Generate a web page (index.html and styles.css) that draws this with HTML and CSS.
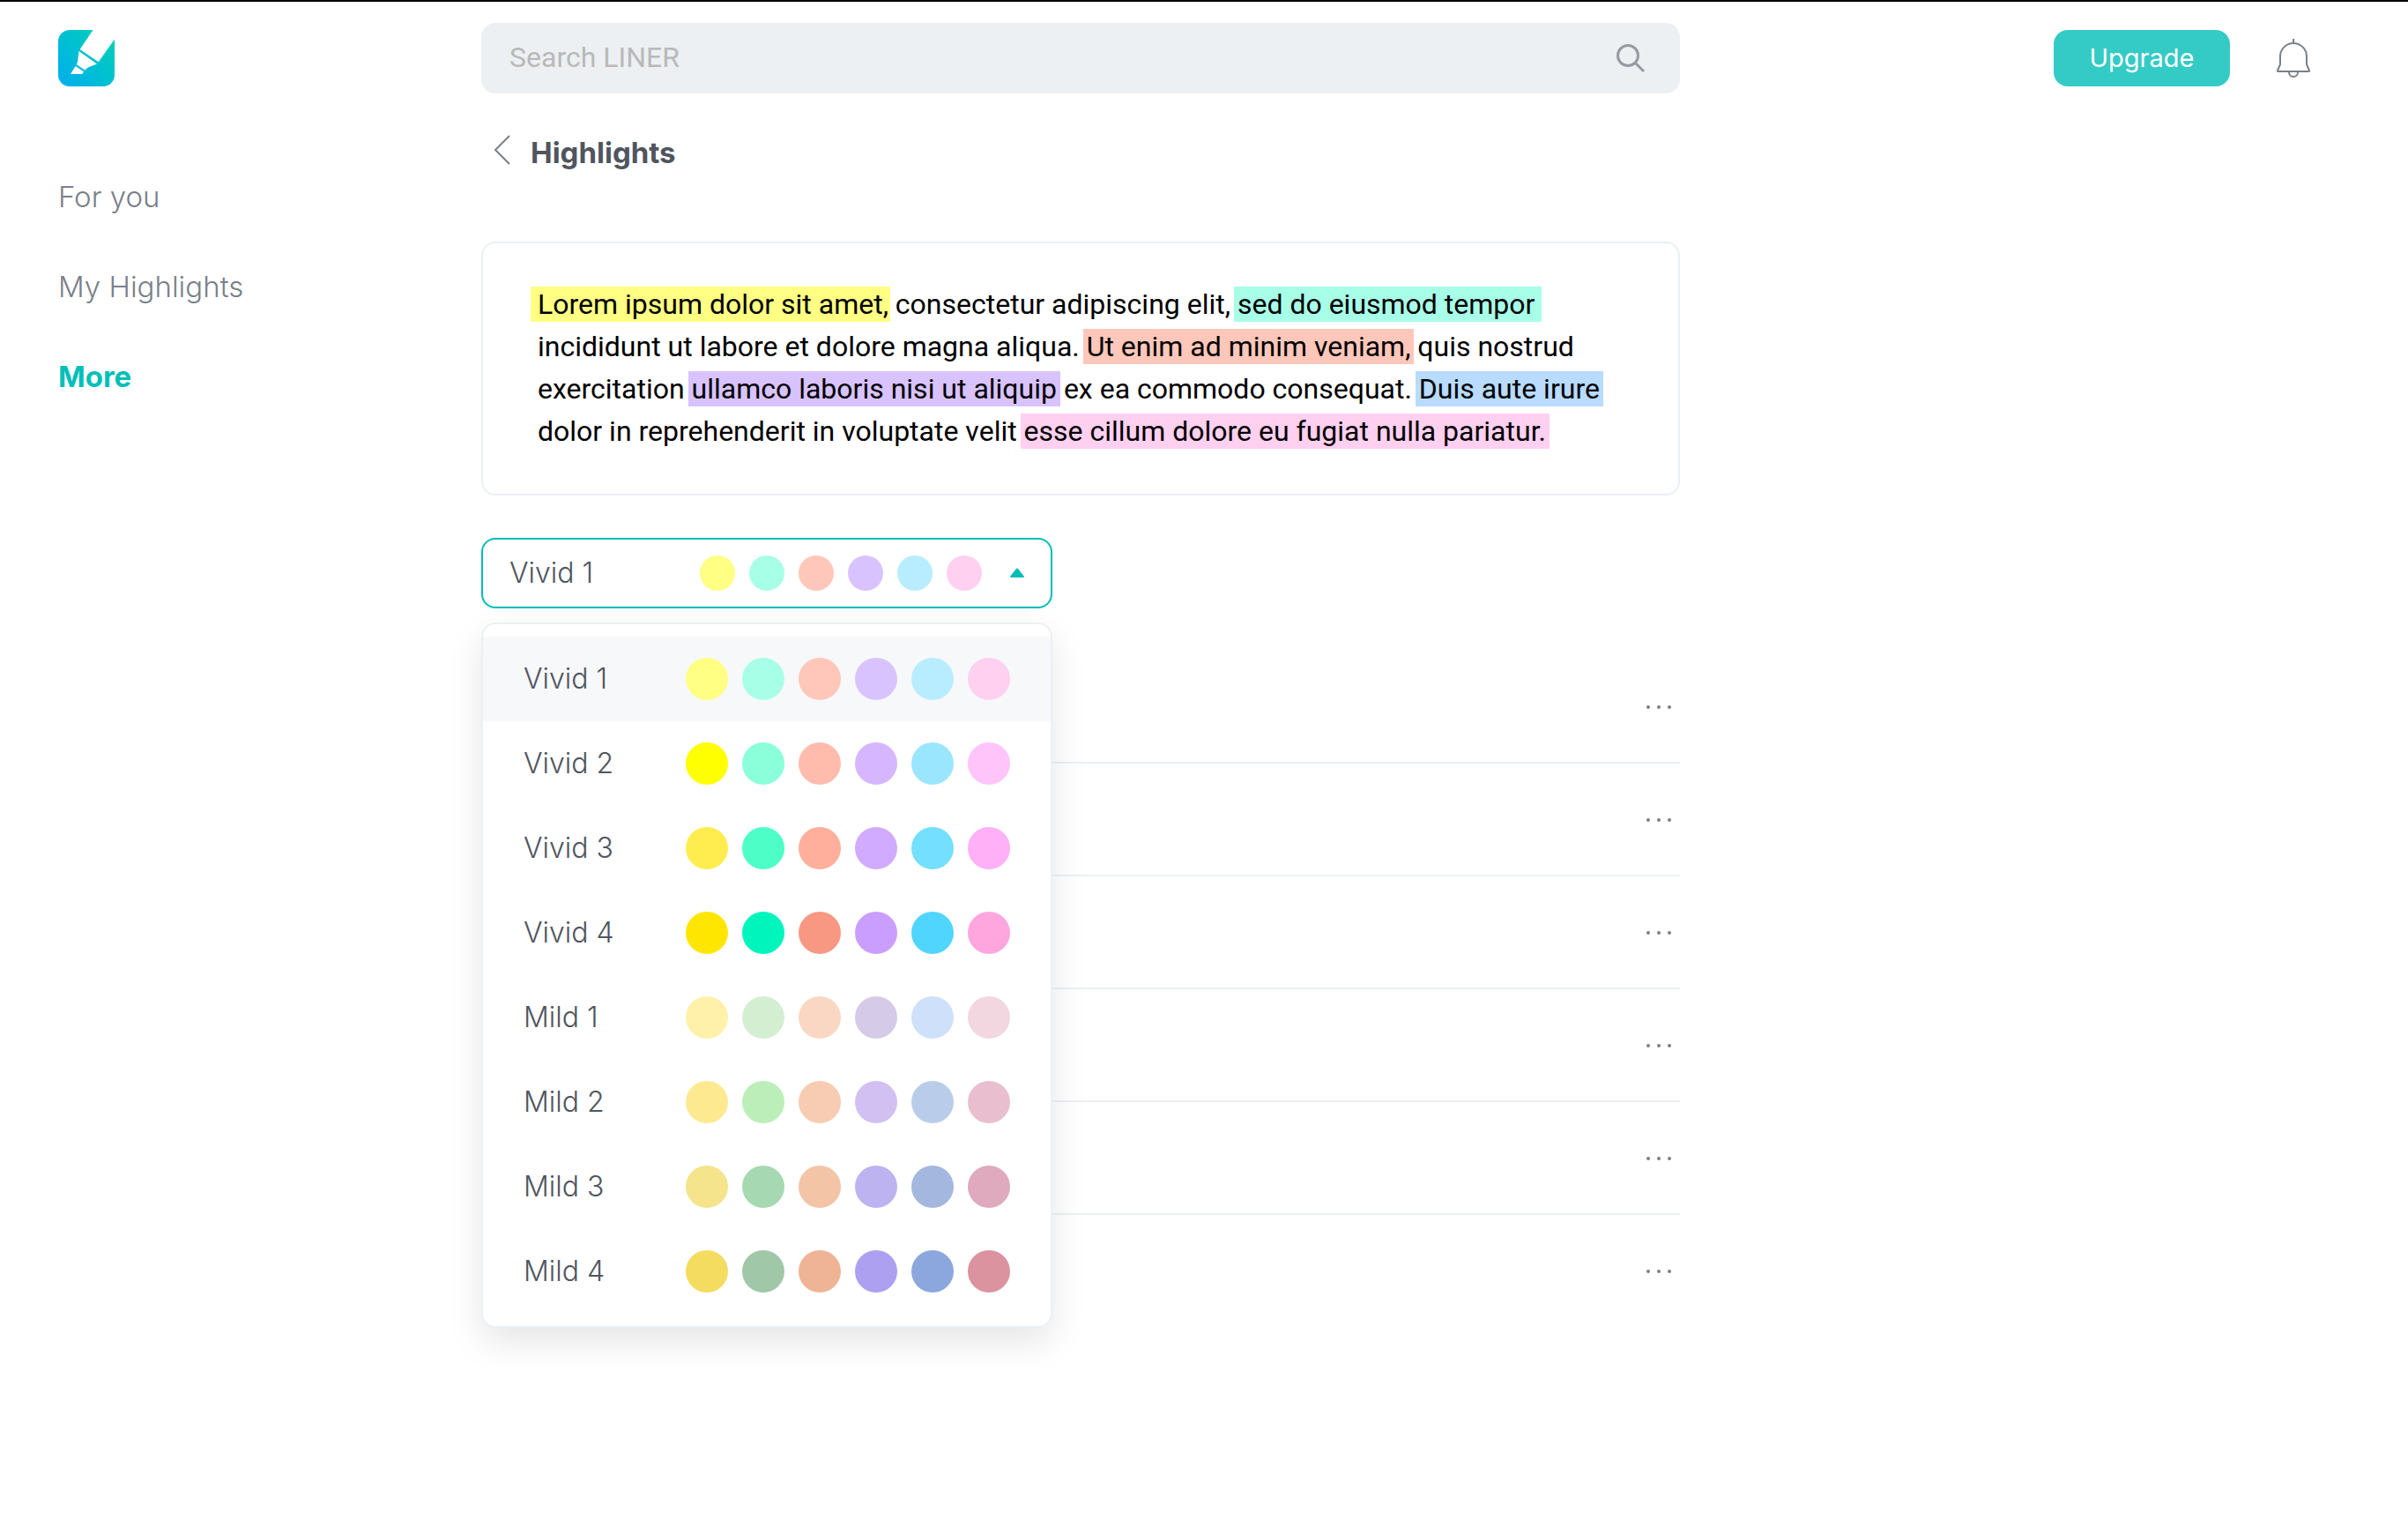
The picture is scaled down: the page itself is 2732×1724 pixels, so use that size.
FILE: index.html
```html
<!DOCTYPE html>
<html lang="en">
<head>
<meta charset="utf-8">
<meta name="viewport" content="width=device-width, initial-scale=1">
<title>LINER - Highlights</title>
<link rel="stylesheet" href="styles.css">
</head>
<body>
<div class="page">
  <header class="topbar">
    <a class="logo" href="#" aria-label="LINER home">
      <svg viewBox="0 0 64 64" width="64" height="64" aria-hidden="true">
        <defs>
          <linearGradient id="logo-fill" x1="0" y1="1" x2="1" y2="0">
            <stop offset="0" stop-color="#00aeef"/>
            <stop offset="0.5" stop-color="#00c0d2"/>
            <stop offset="1" stop-color="#00d2b0"/>
          </linearGradient>
        </defs>
        <rect width="64" height="64" rx="13" fill="url(#logo-fill)"/>
        <path fill="#fff" d="M39.500 0 24.700 22 45.700 36.300 64 10.500V0ZM23.500 24 44 38.500 35.500 41.800C33 43 31.500 44 30.700 45.700L20.700 39C22 37 22.300 36 22.300 34ZM19.700 41 29 47.300 27.300 50H14Z"/>
      </svg>
    </a>
    <form class="search" role="search">
      <input class="search-input" type="search" placeholder="Search LINER" aria-label="Search LINER">
      <button class="icon-button" type="button" aria-label="Search">
        <svg viewBox="0 0 40 40" width="40" height="40" aria-hidden="true" fill="none" stroke="#959aa3" stroke-width="3">
          <circle cx="17" cy="17" r="11.500"/>
          <path d="m25 25 10 10"/>
        </svg>
      </button>
    </form>
    <div class="actions">
      <button class="upgrade" type="button">Upgrade</button>
      <button class="icon-button" type="button" aria-label="Notifications">
        <svg viewBox="0 0 64 64" width="64" height="64" aria-hidden="true" fill="none" stroke="#7a7f8a" stroke-width="2" stroke-linejoin="round">
          <path d="M32 10v5M17 30a15 15 0 0 1 30 0v9l3 7q.500 1-1 1H15q-1.500 0-1-1l3-7ZM27 47v1a5 5 0 0 0 10 0v-1"/>
        </svg>
      </button>
    </div>
  </header>

  <nav class="sidebar" aria-label="Main">
    <a class="nav-link" href="#">For you</a>
    <a class="nav-link" href="#">My Highlights</a>
    <a class="nav-link nav-link-active" href="#" aria-current="page">More</a>
  </nav>

  <main class="content">
    <div class="title-row">
      <a class="back" href="#" aria-label="Back">
        <svg viewBox="0 0 56 40" width="56" height="40" aria-hidden="true" fill="none" stroke="#7a7f8a" stroke-width="2">
          <path d="M32 1 16 17 32 33"/>
        </svg>
      </a>
      <h1 class="title">Highlights</h1>
    </div>

    <p class="preview"><mark class="mark mark-yellow">Lorem ipsum dolor sit amet,</mark> consectetur adipiscing elit, <mark class="mark mark-green">sed do eiusmod tempor</mark> incididunt ut labore et dolore magna aliqua. <mark class="mark mark-coral">Ut enim ad minim veniam,</mark> quis nostrud exercitation <mark class="mark mark-purple">ullamco laboris nisi ut aliquip</mark> ex ea commodo consequat. <mark class="mark mark-blue">Duis aute irure</mark> dolor in reprehenderit in voluptate velit <mark class="mark mark-pink">esse cillum dolore eu fugiat nulla pariatur.</mark></p>

    <div class="picker">
      <button class="picker-toggle" type="button" aria-haspopup="listbox" aria-expanded="true" aria-controls="themes">
        <span class="picker-name">Vivid 1</span>
        <span class="swatches swatches-small">
          <i class="dot" style="background:#ffff83"></i><i class="dot" style="background:#a8ffe8"></i><i class="dot" style="background:#ffc7ba"></i><i class="dot" style="background:#d9c3ff"></i><i class="dot" style="background:#b8edff"></i><i class="dot" style="background:#ffd0ef"></i>
        </span>
        <svg viewBox="0 0 16 12" width="16" height="12" aria-hidden="true"><path fill="#00bdb8" d="M7 1q1-1 2 0l7 9q0 1-1 1H1q-1 0-1-1Z"/></svg>
      </button>
      <div class="menu" id="themes" role="listbox" aria-label="Highlight colors">
        <button class="option option-selected" type="button" role="option" aria-selected="true">Vivid 1
          <span class="swatches"><i class="dot" style="background:#ffff83"></i><i class="dot" style="background:#a8ffe8"></i><i class="dot" style="background:#ffc7ba"></i><i class="dot" style="background:#d9c3ff"></i><i class="dot" style="background:#b8edff"></i><i class="dot" style="background:#ffd0ef"></i></span>
        </button>
        <button class="option" type="button" role="option" aria-selected="false">Vivid 2
          <span class="swatches"><i class="dot" style="background:#ffff00"></i><i class="dot" style="background:#8bffd9"></i><i class="dot" style="background:#ffbcad"></i><i class="dot" style="background:#d6b7ff"></i><i class="dot" style="background:#9be6ff"></i><i class="dot" style="background:#ffc4fa"></i></span>
        </button>
        <button class="option" type="button" role="option" aria-selected="false">Vivid 3
          <span class="swatches"><i class="dot" style="background:#ffed4f"></i><i class="dot" style="background:#4dffc6"></i><i class="dot" style="background:#ffaf9c"></i><i class="dot" style="background:#d1abff"></i><i class="dot" style="background:#74dfff"></i><i class="dot" style="background:#ffb0f7"></i></span>
        </button>
        <button class="option" type="button" role="option" aria-selected="false">Vivid 4
          <span class="swatches"><i class="dot" style="background:#ffe600"></i><i class="dot" style="background:#00f5bc"></i><i class="dot" style="background:#f89882"></i><i class="dot" style="background:#c99eff"></i><i class="dot" style="background:#50d5ff"></i><i class="dot" style="background:#ffa6df"></i></span>
        </button>
        <button class="option" type="button" role="option" aria-selected="false">Mild 1
          <span class="swatches"><i class="dot" style="background:#fff1a9"></i><i class="dot" style="background:#d4eed2"></i><i class="dot" style="background:#fad7c3"></i><i class="dot" style="background:#d5cae8"></i><i class="dot" style="background:#cfe0fa"></i><i class="dot" style="background:#f2d6e0"></i></span>
        </button>
        <button class="option" type="button" role="option" aria-selected="false">Mild 2
          <span class="swatches"><i class="dot" style="background:#fdea90"></i><i class="dot" style="background:#bbeeb9"></i><i class="dot" style="background:#f8ccb2"></i><i class="dot" style="background:#d2c0f2"></i><i class="dot" style="background:#b9cdea"></i><i class="dot" style="background:#e9bfcf"></i></span>
        </button>
        <button class="option" type="button" role="option" aria-selected="false">Mild 3
          <span class="swatches"><i class="dot" style="background:#f5e48b"></i><i class="dot" style="background:#a6d9b1"></i><i class="dot" style="background:#f4c4a6"></i><i class="dot" style="background:#bdb3f0"></i><i class="dot" style="background:#a4b7df"></i><i class="dot" style="background:#dfaabd"></i></span>
        </button>
        <button class="option" type="button" role="option" aria-selected="false">Mild 4
          <span class="swatches"><i class="dot" style="background:#f4dc60"></i><i class="dot" style="background:#9fc7a8"></i><i class="dot" style="background:#eeb495"></i><i class="dot" style="background:#ada0f1"></i><i class="dot" style="background:#8ca7dd"></i><i class="dot" style="background:#db939f"></i></span>
        </button>
      </div>
    </div>

    <ul class="colors">
      <li class="color-row"><button class="icon-button" type="button" aria-label="More options"><svg viewBox="0 0 48 24" width="48" height="24" fill="#7a7f8a"><circle cx="12" cy="12" r="2"/><circle cx="24" cy="12" r="2"/><circle cx="36" cy="12" r="2"/></svg></button></li>
      <li class="color-row"><button class="icon-button" type="button" aria-label="More options"><svg viewBox="0 0 48 24" width="48" height="24" fill="#7a7f8a"><circle cx="12" cy="12" r="2"/><circle cx="24" cy="12" r="2"/><circle cx="36" cy="12" r="2"/></svg></button></li>
      <li class="color-row"><button class="icon-button" type="button" aria-label="More options"><svg viewBox="0 0 48 24" width="48" height="24" fill="#7a7f8a"><circle cx="12" cy="12" r="2"/><circle cx="24" cy="12" r="2"/><circle cx="36" cy="12" r="2"/></svg></button></li>
      <li class="color-row"><button class="icon-button" type="button" aria-label="More options"><svg viewBox="0 0 48 24" width="48" height="24" fill="#7a7f8a"><circle cx="12" cy="12" r="2"/><circle cx="24" cy="12" r="2"/><circle cx="36" cy="12" r="2"/></svg></button></li>
      <li class="color-row"><button class="icon-button" type="button" aria-label="More options"><svg viewBox="0 0 48 24" width="48" height="24" fill="#7a7f8a"><circle cx="12" cy="12" r="2"/><circle cx="24" cy="12" r="2"/><circle cx="36" cy="12" r="2"/></svg></button></li>
      <li class="color-row"><button class="icon-button" type="button" aria-label="More options"><svg viewBox="0 0 48 24" width="48" height="24" fill="#7a7f8a"><circle cx="12" cy="12" r="2"/><circle cx="24" cy="12" r="2"/><circle cx="36" cy="12" r="2"/></svg></button></li>
    </ul>
  </main>
</div>
</body>
</html>
```
FILE: styles.css
```css
* {
  box-sizing: border-box;
}

body {
  margin: 0;
  border-top: 2px solid #000;
  background: #fff;
  color: #50555e;
  font: 300 32px/40px Inter, sans-serif;
}

button,
input {
  margin: 0;
  padding: 0;
  border: 0;
  background: none;
  color: inherit;
  font: inherit;
}

button {
  cursor: pointer;
}

a {
  color: inherit;
  text-decoration: none;
}

svg {
  display: block;
}

.page {
  display: grid;
  grid-template-columns: 480px minmax(0, 1360px) minmax(max-content, 1fr);
  padding: 24px 98px 48px 66px;
}

/* Header */

.topbar {
  display: grid;
  grid-column: 1 / -1;
  grid-template-columns: subgrid;
  align-items: center;
}

.logo {
  justify-self: start;
}

.search {
  display: flex;
  align-items: center;
  height: 80px;
  padding: 0 36px 0 32px;
  border-radius: 16px;
  background: #ecf0f3;
}

.search-input {
  flex: 1;
  min-width: 0;
  padding-bottom: 2px;
  outline: 0;
  font-family: Roboto, sans-serif;
  font-weight: 400;
}

.search-input::placeholder {
  color: #b9b9b9;
}

.actions {
  display: flex;
  justify-content: flex-end;
  align-items: center;
  gap: 40px;
}

.upgrade {
  width: 200px;
  height: 64px;
  border-radius: 16px;
  background: #34cbc6;
  color: #fff;
  font-size: 29px;
  font-weight: 400;
}

/* Navigation */

.sidebar {
  display: flex;
  flex-direction: column;
  align-items: flex-start;
  gap: 62px;
  padding-top: 97px;
}

.nav-link {
  color: #7a7f8a;
  font-size: 33px;
}

.nav-link-active {
  color: #00bfb8;
  font-weight: 700;
}

/* Content */

.content {
  padding-top: 47px;
}

.title-row {
  display: flex;
}

.title {
  margin: 0;
  font-size: 33px;
  font-weight: 700;
}

.preview {
  margin: 81px 0 48px;
  padding: 45px 62px 47px;
  border: 2px solid #ecf0f3;
  border-radius: 16px;
  color: #000;
  font: 400 32px/48px Roboto, sans-serif;
}

/* The shadows widen each stroke beyond its words without moving the text. */
.mark {
  padding: 1px 0;
  background: var(--ink);
  box-shadow: -4px 0 var(--ink), 4px 0 var(--ink);
  color: inherit;
}

.mark-yellow {
  --ink: #ffff83;
  box-shadow: -8px 0 var(--ink), 2px 0 var(--ink);
}

.mark-green {
  --ink: #a8ffe8;
  box-shadow: -4px 0 var(--ink), 8px 0 var(--ink);
}

.mark-coral {
  --ink: #ffc7ba;
}

.mark-purple {
  --ink: #d9c3ff;
}

.mark-blue {
  --ink: #b8dbff;
}

.mark-pink {
  --ink: #ffd0ef;
}

/* Color theme picker */

.picker {
  position: relative;
  max-width: 648px;
}

.picker-toggle {
  display: flex;
  align-items: center;
  gap: 32px;
  width: 100%;
  height: 80px;
  padding: 0 30px;
  border: 2px solid #00bdb8;
  border-radius: 16px;
}

.picker-name {
  flex: 1;
  text-align: left;
}

.swatches {
  display: flex;
  gap: 16px;
}

.dot {
  width: 48px;
  height: 48px;
  border-radius: 50%;
}

.swatches-small .dot {
  width: 40px;
  height: 40px;
}

.menu {
  position: absolute;
  top: 96px;
  left: 0;
  width: 100%;
  padding: 14px 0;
  border: 2px solid #ecf0f3;
  border-radius: 16px;
  background: #fff;
  box-shadow: 0 16px 40px rgba(0, 0, 0, 0.1);
}

.option {
  display: flex;
  justify-content: space-between;
  align-items: center;
  width: 100%;
  height: 96px;
  padding: 0 46px;
}

.option-selected {
  background: #f7f8fa;
}

/* Rows behind the menu */

.colors {
  margin: 48px 0 0;
  padding: 0;
  list-style: none;
}

.color-row {
  display: flex;
  justify-content: flex-end;
  align-items: center;
  height: 128px;
  padding-top: 2px;
  border-bottom: 2px solid #ecf0f3;
}

.color-row:last-child {
  border-bottom-color: transparent;
}
```
